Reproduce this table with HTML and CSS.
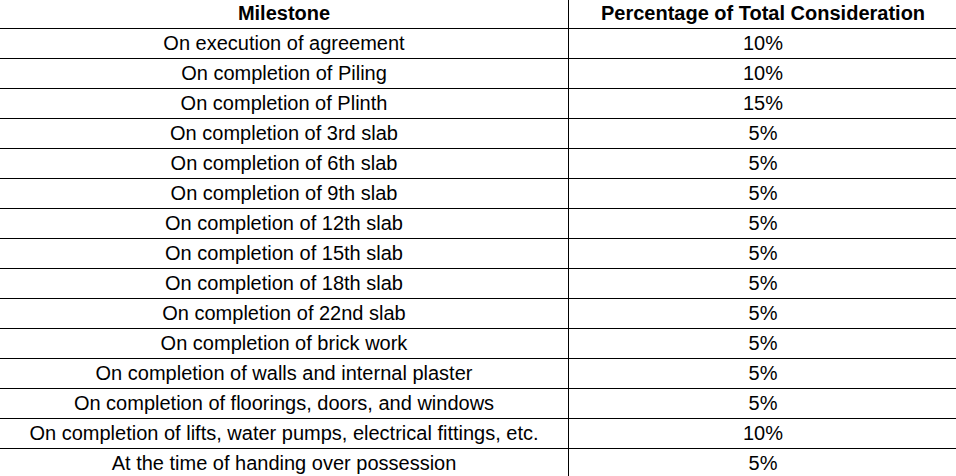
FILE: index.html
```html
<!DOCTYPE html>
<html lang="en">
<head>
<meta charset="utf-8">
<title>Payment Schedule</title>
<link rel="stylesheet" href="styles.css">
</head>
<body>
<table class="schedule">
  <thead>
    <tr><th class="col-milestone">Milestone</th><th>Percentage of Total Consideration</th></tr>
  </thead>
  <tbody>
    <tr><td>On execution of agreement</td><td>10%</td></tr>
    <tr><td>On completion of Piling</td><td>10%</td></tr>
    <tr><td>On completion of Plinth</td><td>15%</td></tr>
    <tr><td>On completion of 3rd slab</td><td>5%</td></tr>
    <tr><td>On completion of 6th slab</td><td>5%</td></tr>
    <tr><td>On completion of 9th slab</td><td>5%</td></tr>
    <tr><td>On completion of 12th slab</td><td>5%</td></tr>
    <tr><td>On completion of 15th slab</td><td>5%</td></tr>
    <tr><td>On completion of 18th slab</td><td>5%</td></tr>
    <tr><td>On completion of 22nd slab</td><td>5%</td></tr>
    <tr><td>On completion of brick work</td><td>5%</td></tr>
    <tr><td>On completion of walls and internal plaster</td><td>5%</td></tr>
    <tr><td>On completion of floorings, doors, and windows</td><td>5%</td></tr>
    <tr><td>On completion of lifts, water pumps, electrical fittings, etc.</td><td>10%</td></tr>
    <tr><td>At the time of handing over possession</td><td>5%</td></tr>
  </tbody>
</table>
</body>
</html>
```
FILE: styles.css
```css
html, body {
  margin: 0;
  padding: 0;
  background: #fff;
  overflow: hidden;
}

.schedule {
  border-collapse: separate;
  border-spacing: 0;
  border-top: 1px solid #000;
  border-left: 1px solid #000;
  margin: -2px 0 0 -1px;
  table-layout: fixed;
  width: 959px;
  font-family: "Liberation Sans", Arial, sans-serif;
  font-size: 20px;
  color: #000;
}

.schedule th,
.schedule td {
  border-right: 1px solid #000;
  border-bottom: 1px solid #000;
  padding: 0;
  line-height: 29px;
  text-align: center;
  white-space: nowrap;
}

.schedule th {
  font-weight: bold;
}

.schedule .col-milestone {
  width: 568px;
}
```
